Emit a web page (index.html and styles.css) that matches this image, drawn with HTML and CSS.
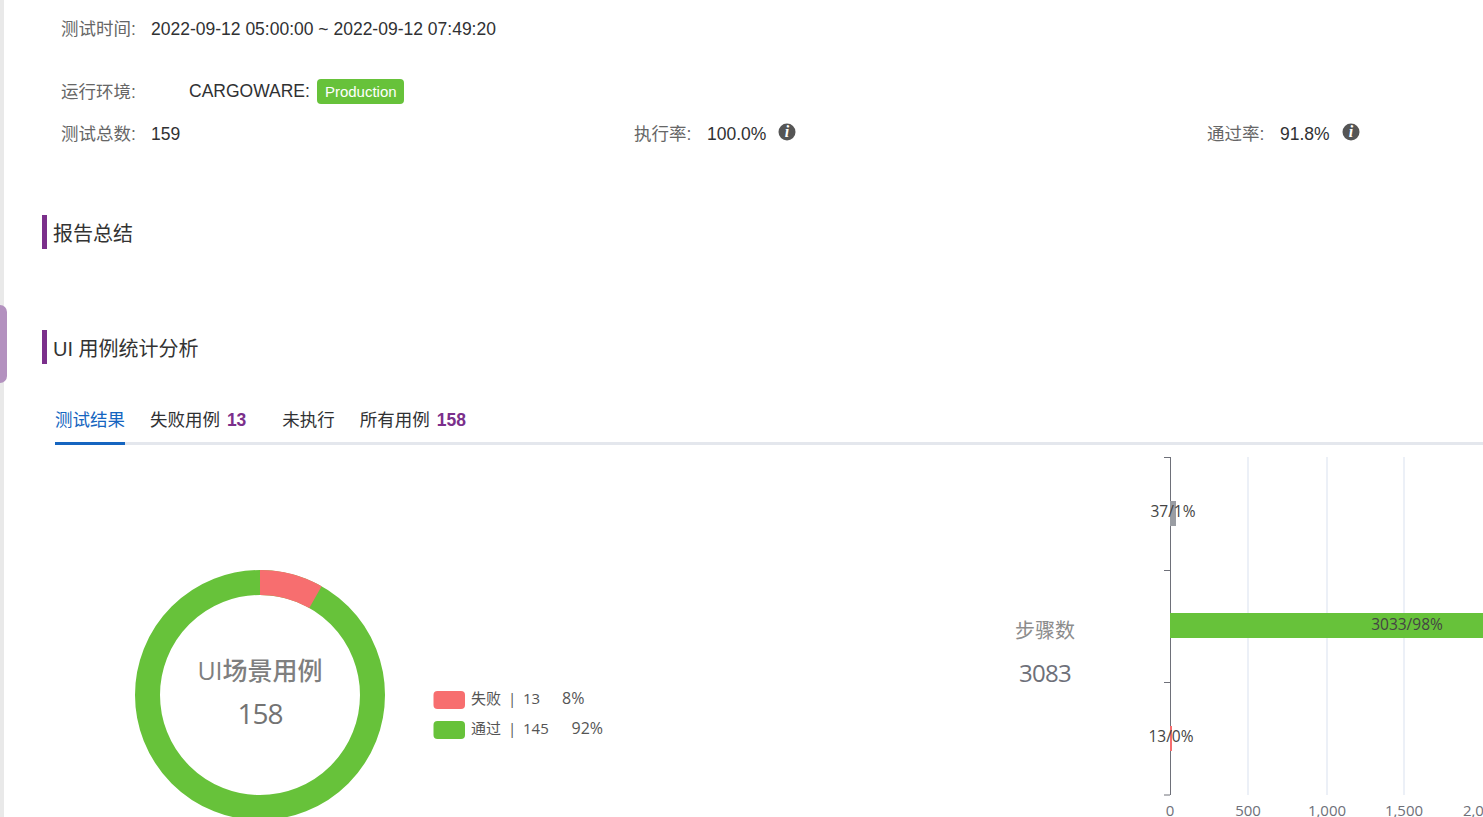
FILE: index.html
```html
<!DOCTYPE html>
<html lang="zh-CN">
<head>
    <meta charset="UTF-8">
    <title>测试报告</title>
    <link rel="stylesheet" href="styles.css">
</head>
<body>
    <div class="side-edge"></div>
    <div class="side-handle"></div>

    <main class="report">
        <div class="info-row info-time">
            <span class="info-label">测试时间:</span>
            <span class="info-value">2022-09-12 05:00:00 ~ 2022-09-12 07:49:20</span>
        </div>
        <div class="info-row info-env">
            <span class="info-label">运行环境:</span>
            <span class="info-value env-name">CARGOWARE:</span>
            <span class="env-tag">Production</span>
        </div>
        <div class="info-stats">
            <div class="info-row">
                <span class="info-label">测试总数:</span>
                <span class="info-value">159</span>
            </div>
            <div class="info-row">
                <span class="info-label short">执行率:</span>
                <span class="info-value">100.0%</span>
                <svg class="info-icon" viewBox="0 0 18 18"><circle cx="9" cy="9" r="8.5"/><text x="9" y="14" text-anchor="middle">i</text></svg>
            </div>
            <div class="info-row">
                <span class="info-label short">通过率:</span>
                <span class="info-value">91.8%</span>
                <svg class="info-icon" viewBox="0 0 18 18"><circle cx="9" cy="9" r="8.5"/><text x="9" y="14" text-anchor="middle">i</text></svg>
            </div>
        </div>

        <h2 class="section-title title-summary">报告总结</h2>
        <h2 class="section-title title-ui">UI 用例统计分析</h2>

        <div class="tabs">
            <a class="tab active">测试结果</a>
            <a class="tab tab-failed">失败用例 <b>13</b></a>
            <a class="tab tab-pending">未执行</a>
            <a class="tab">所有用例 <b>158</b></a>
        </div>

        <div class="charts">
            <!-- 用例饼图 -->
            <svg class="chart-pie" width="600" height="372" viewBox="55 445 600 372">
                <circle cx="260" cy="695" r="112.5" fill="none" stroke="#67c23a" stroke-width="25"/>
                <path d="M260 570 A125 125 0 0 1 321.6 586.2 L309.3 608 A100 100 0 0 0 260 595 Z" fill="#f76e6f"/>
                <text class="pie-title" x="260" y="680" text-anchor="middle">UI场景用例</text>
                <text class="pie-count" x="260" y="724" text-anchor="middle">158</text>

                <rect x="433.5" y="691" width="31.5" height="18" rx="4" fill="#f76e6f"/>
                <text class="legend" x="471" y="704">失败</text>
                <text class="legend" x="508" y="704">|</text>
                <text class="legend" x="523" y="704">13</text>
                <text class="legend legend-pct" x="562" y="704">8%</text>

                <rect x="433.5" y="721" width="31.5" height="18" rx="4" fill="#67c23a"/>
                <text class="legend" x="471" y="734">通过</text>
                <text class="legend" x="508" y="734">|</text>
                <text class="legend" x="523" y="734">145</text>
                <text class="legend legend-pct" x="571.5" y="734">92%</text>
            </svg>

            <!-- 步骤柱状图 -->
            <svg class="chart-bar" width="828" height="372" viewBox="655 445 828 372">
                <text class="bar-title" x="1045" y="638" text-anchor="middle">步骤数</text>
                <text class="bar-count" x="1045" y="682" text-anchor="middle">3083</text>

                <path class="grid" d="M1248 457V795M1327 457V795M1404 457V795"/>
                <path class="axis" d="M1170.5 457V795M1164 457.5H1170M1164 570.5H1170M1164 682.5H1170M1164 795H1170"/>
                <rect x="1170" y="501" width="6" height="25" fill="#9a9da3"/>
                <rect x="1170" y="613" width="313" height="25" fill="#67c23a"/>
                <rect x="1170" y="726" width="2" height="25" fill="#f76e6f"/>

                <text class="bar-label" x="1173" y="517" text-anchor="middle">37/1%</text>
                <text class="bar-label" x="1407" y="630" text-anchor="middle">3033/98%</text>
                <text class="bar-label" x="1171" y="742" text-anchor="middle">13/0%</text>

                <text class="tick" x="1170" y="816" text-anchor="middle">0</text>
                <text class="tick" x="1248" y="816" text-anchor="middle">500</text>
                <text class="tick" x="1327" y="816" text-anchor="middle">1,000</text>
                <text class="tick" x="1404" y="816" text-anchor="middle">1,500</text>
                <text class="tick" x="1482" y="816" text-anchor="middle">2,000</text>
            </svg>
        </div>
    </main>
</body>
</html>
```

FILE: styles.css
```css
html, body {
    margin: 0;
    height: 817px;
    overflow: hidden;
    background-color: #fff;
}
body {
    font-family: "Liberation Sans", "Noto Sans CJK SC", sans-serif;
    color: #303133;
}
.side-edge {
    position: absolute;
    left: 0;
    top: 0;
    bottom: 0;
    width: 4px;
    background-color: #e9e9e9;
}
.side-handle {
    position: absolute;
    left: 0;
    top: 305px;
    width: 7px;
    height: 78px;
    background-color: #b391bf;
    border-radius: 0 9px 9px 0;
}
.report {
    padding: 18px 0 0 42px;
}
.info-row {
    display: flex;
    align-items: center;
    font-size: 17.5px;
    height: 22px;
}
.info-time, .info-env, .info-stats {
    padding-left: 19px;
}
.info-label {
    color: #666;
    width: 90px;
    padding-bottom: 3px;
}
.info-label.short {
    width: 73px;
}
.info-env {
    margin-top: 39px;
    height: 25px;
}
.env-name {
    margin-left: 38px;
}
.env-tag {
    margin-left: 7px;
    background-color: #67c23a;
    color: #fff;
    font-size: 15px;
    line-height: 25px;
    padding: 0 7px 0 8px;
    border-radius: 4px;
}
.info-stats {
    display: grid;
    grid-template-columns: 573px 573px 1fr;
    margin-top: 19px;
}
.info-icon {
    width: 18px;
    height: 18px;
    margin: -5px 0 0 12px;
}
.info-icon circle {
    fill: #555;
}
.info-icon text {
    fill: #fff;
    font-family: "Liberation Serif", serif;
    font-weight: bold;
    font-style: italic;
    font-size: 16px;
}
.section-title {
    margin: 0;
    height: 34px;
    line-height: 38px;
    border-left: 5px solid #7b2f8b;
    padding-left: 6px;
    font-size: 20px;
    font-weight: normal;
    color: #333;
}
.title-summary {
    margin-top: 70px;
}
.title-ui {
    margin-top: 81px;
}
.tabs {
    display: flex;
    margin: 38px 0 0 13px;
    height: 40px;
    border-bottom: 3px solid #e4e7ed;
}
.tab {
    display: block;
    height: 40px;
    line-height: 36px;
    margin-right: 25px;
    font-size: 17.5px;
    color: #303133;
}
.tab b {
    color: #7b2f8b;
    margin-left: 2px;
}
.tab.active {
    color: #1565c0;
    border-bottom: 3px solid #1565c0;
}
.tab-failed {
    margin-right: 36px;
}
.charts {
    display: flex;
    margin-left: 13px;
}
.chart-pie, .chart-bar {
    display: block;
    flex: none;
    font-family: "Open Sans", "Noto Sans CJK SC", sans-serif;
}
.pie-title {
    font-size: 25px;
    font-weight: 500;
    fill: #7f7f7f;
}
.pie-count {
    font-size: 28px;
    letter-spacing: -1px;
    fill: #737373;
}
.legend {
    font-size: 15px;
    fill: #555;
}
.legend-pct {
    font-size: 16px;
}
.bar-title {
    font-size: 20px;
    fill: #8c8c8c;
}
.bar-count {
    font-size: 24px;
    letter-spacing: -0.7px;
    fill: #6e7079;
}
.grid {
    fill: none;
    stroke: #e6ebf5;
    stroke-width: 1.5;
}
.axis {
    fill: none;
    stroke: #6e7079;
    stroke-width: 1;
}
.bar-label {
    font-size: 15.5px;
    fill: #444;
}
.tick {
    font-size: 15px;
    fill: #6e7079;
}
```
